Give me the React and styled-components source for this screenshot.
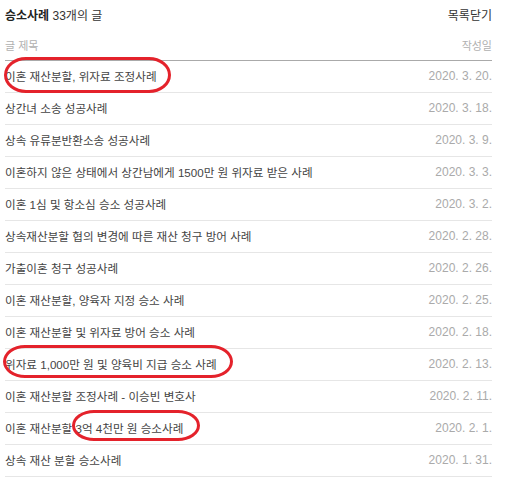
import React from "react";
import styled, { createGlobalStyle } from "styled-components";

const GlobalStyle = createGlobalStyle`
  html, body {
    margin: 0;
    padding: 0;
    background: #fff;
  }
  body {
    font-family: "Liberation Sans", "Noto Sans CJK KR", sans-serif;
    color: #333;
  }
`;

const Board = styled.div`
  width: 487px;
  padding: 0 13px 0 5px;
`;

const TopBar = styled.div`
  display: flex;
  align-items: center;
  justify-content: space-between;
  height: 29px;
  padding-bottom: 1px;
  font-size: 12px;
`;

const Category = styled.div`
  color: #333;
  white-space: nowrap;

  strong {
    font-weight: 700;
    color: #222;
  }
`;

const CloseLink = styled.a`
  color: #333;
  text-decoration: none;
  cursor: pointer;
`;

const ColumnHead = styled.div`
  display: flex;
  align-items: center;
  justify-content: space-between;
  height: 30px;
  border-bottom: 1px solid #aaa;
  font-size: 11px;
  color: #b0b0b0;
`;

const List = styled.ul`
  list-style: none;
  margin: 0;
  padding: 0;
`;

const Row = styled.li`
  position: relative;
  display: flex;
  align-items: center;
  justify-content: space-between;
  height: 30px;
  padding-bottom: 1px;
  border-bottom: 1px solid #e6e6e6;
`;

const Title = styled.a`
  font-size: 11.6px;
  color: #444;
  text-decoration: none;
  white-space: nowrap;
  cursor: pointer;
`;

const DateText = styled.span`
  font-size: 12px;
  color: #aaa;
`;

/* red hand-drawn circle annotation over a title */
const Mark = styled.span`
  position: absolute;
  pointer-events: none;
  left: ${({ $left }) => $left}px;
  top: ${({ $top }) => $top}px;
  width: ${({ $width }) => $width}px;
  height: ${({ $height }) => $height}px;
  box-sizing: border-box;
  border: 3px solid #e4222b;
  border-radius: 22px / 50%;
  z-index: 2;
`;

const posts = [
  { title: "이혼 재산분할, 위자료 조정사례", date: "2020. 3. 20.", mark: { left: -1, top: -4, width: 167, height: 36 } },
  { title: "상간녀 소송 성공사례", date: "2020. 3. 18." },
  { title: "상속 유류분반환소송 성공사례", date: "2020. 3. 9." },
  { title: "이혼하지 않은 상태에서 상간남에게 1500만 원 위자료 받은 사례", date: "2020. 3. 3." },
  { title: "이혼 1심 및 항소심 승소 성공사례", date: "2020. 3. 2." },
  { title: "상속재산분할 협의 변경에 따른 재산 청구 방어 사례", date: "2020. 2. 28." },
  { title: "가출이혼 청구 성공사례", date: "2020. 2. 26." },
  { title: "이혼 재산분할, 양육자 지정 승소 사례", date: "2020. 2. 25." },
  { title: "이혼 재산분할 및 위자료 방어 승소 사례", date: "2020. 2. 18." },
  { title: "위자료 1,000만 원 및 양육비 지급 승소 사례", date: "2020. 2. 13.", mark: { left: -2, top: -4, width: 230, height: 33 } },
  { title: "이혼 재산분할 조정사례 - 이승빈 변호사", date: "2020. 2. 11." },
  { title: "이혼 재산분할 3억 4천만 원 승소사례", date: "2020. 2. 1.", mark: { left: 67, top: -3, width: 128, height: 31 } },
  { title: "상속 재산 분할 승소사례", date: "2020. 1. 31." },
];

export default function App() {
  return (
    <>
      <GlobalStyle />
      <Board>
        <TopBar>
          <Category>
            <strong>승소사례</strong> 33개의 글
          </Category>
          <CloseLink>목록닫기</CloseLink>
        </TopBar>
        <ColumnHead>
          <span>글 제목</span>
          <span>작성일</span>
        </ColumnHead>
        <List>
          {posts.map((p) => (
            <Row key={p.title}>
              <Title>{p.title}</Title>
              <DateText>{p.date}</DateText>
              {p.mark && (
                <Mark
                  $left={p.mark.left}
                  $top={p.mark.top}
                  $width={p.mark.width}
                  $height={p.mark.height}
                />
              )}
            </Row>
          ))}
        </List>
      </Board>
    </>
  );
}
